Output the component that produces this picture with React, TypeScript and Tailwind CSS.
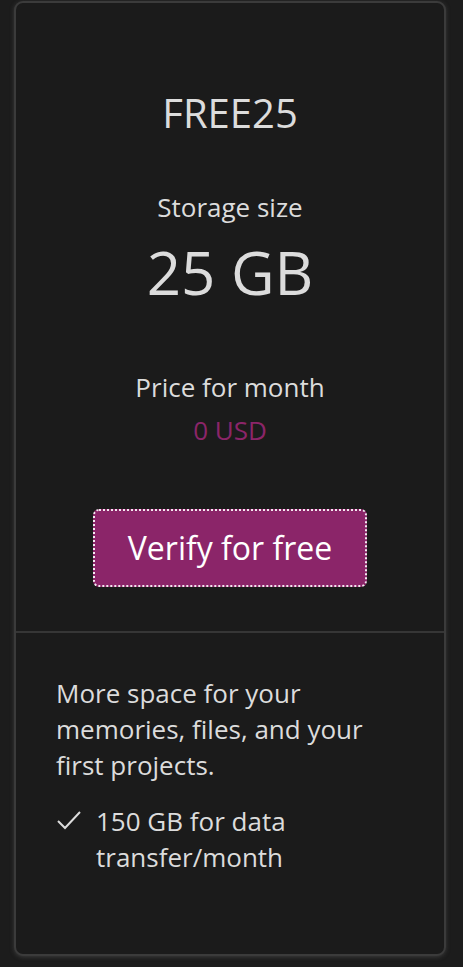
import React from 'react';

const App: React.FC = () => {
  return (
    <div className="min-h-[967px] w-[463px] bg-[#1c1c1c] pl-[14px] pr-[17px] pt-[1px] pb-[10px] font-['Open_Sans',sans-serif]">
      <div className="flex h-[955px] flex-col rounded-[9px] border-2 border-[#3b3b3b] bg-[#1b1b1b] shadow-[0_1px_4px_rgba(80,80,80,0.6)]">
        {/* Plan header */}
        <div className="flex flex-col items-center pt-[84px] text-[#dcdcdc]">
          <h2 className="text-[40px] leading-[52px]">FREE25</h2>
          <p className="mt-[50px] text-[26px] leading-[36px]">Storage size</p>
          <p className="mt-[12px] text-[60px] leading-[70px]">25 GB</p>
          <p className="mt-[62px] text-[26px] leading-[36px]">Price for month</p>
          <p className="mt-[7px] text-[26px] leading-[36px] text-[#8b2569]">0 USD</p>
          <button className="mt-[61px] mb-[44px] flex h-[78px] w-[274px] items-center justify-center rounded-[6px] border-2 border-dotted border-white/90 bg-[#8b2569] text-[32px] text-white">
            Verify for free
          </button>
        </div>

        {/* Features */}
        <div className="border-t-2 border-[#363636] px-[40px] pt-[42px] text-[26px] leading-[36px] text-[#dcdcdc]">
          <p>More space for your memories, files, and your first projects.</p>
          <div className="mt-[20px] flex">
            <svg width="26" height="22" viewBox="0 0 26 22" className="mt-[6px] mr-[14px] shrink-0">
              <path d="M2 12 L9 19 L24 3" fill="none" stroke="#dcdcdc" strokeWidth="2" />
            </svg>
            <p>150 GB for data transfer/month</p>
          </div>
        </div>
      </div>
    </div>
  );
};

export default App;
